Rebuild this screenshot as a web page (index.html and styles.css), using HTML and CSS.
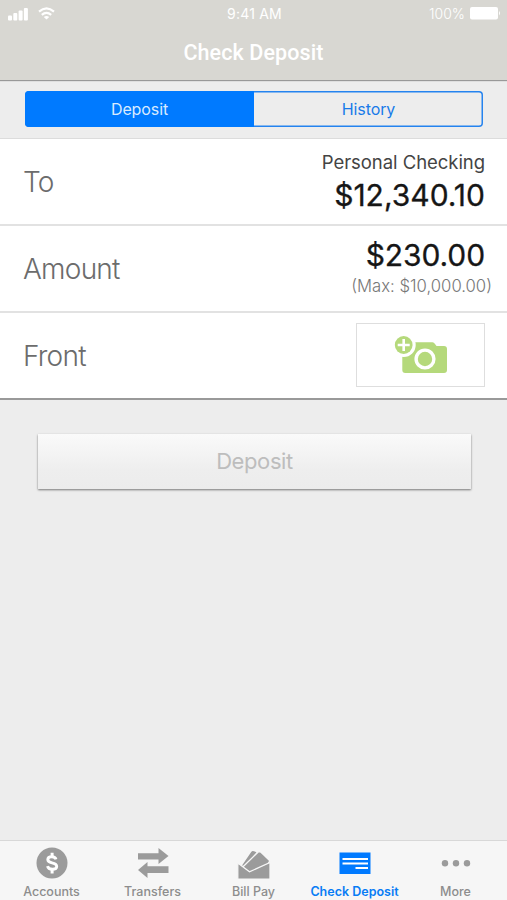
FILE: index.html
```html
<!DOCTYPE html>
<html lang="en">
<head>
<meta charset="utf-8">
<title>Check Deposit</title>
<link rel="stylesheet" href="styles.css">
</head>
<body>
<div class="app">
  <header class="header">
    <div class="status">
      <div class="signal">
        <svg width="21" height="14" viewBox="0 0 21 14" fill="#fff"><rect x="0" y="8.5" width="4" height="5" rx="1"/><rect x="5.3" y="6" width="4" height="7.5" rx="1"/><rect x="10.6" y="3.5" width="4" height="10" rx="1"/><rect x="15.9" y="1" width="4" height="12.5" rx="1"/></svg>
        <svg class="wifi" width="17" height="13" viewBox="0 0 17 13" fill="none" stroke="#fff" stroke-width="2.2"><path d="M1 4.600Q8.500-1.800 16 4.600M3.800 7.800Q8.500 3.800 13.200 7.800"/><path fill="#fff" stroke="none" d="M5.800 10Q8.500 7.800 11.200 10L8.500 12.600Z"/></svg>
      </div>
      <span class="time">9:41 AM</span>
      <div class="battery"><span class="percent">100%</span><svg width="31" height="13" viewBox="0 0 31 13" fill="#fff"><rect width="28" height="12.500" rx="2"/><path d="M29 4q2 2.200 0 4.500z"/></svg></div>
    </div>
    <h1 class="title">Check Deposit</h1>
  </header>
  <nav class="segments">
    <div class="control"><span class="segment selected">Deposit</span><span class="segment">History</span></div>
  </nav>
  <main class="form">
    <section class="row"><span class="label">To</span><div class="value"><span class="account">Personal Checking</span><span class="money balance">$12,340.10</span></div></section>
    <section class="row"><span class="label">Amount</span><div class="value"><span class="money amount">$230.00</span><span class="limit">(Max: $10,000.00)</span></div></section>
    <section class="row"><span class="label">Front</span>
      <div class="photo"><svg width="54" height="40" viewBox="0 0 54 40"><path fill="#b5d97b" d="M11 16H16V11L21 7.300H38.500Q40 7.300 41 9L42.500 11H50Q53 11 53 14V35Q53 38 50 38H11.300Q8.300 38 8.300 35V18Z"/><circle cx="31" cy="24" r="8.900" fill="#b5d97b" stroke="#fff" stroke-width="3.400"/><circle cx="9.700" cy="10" r="12" fill="#fff"/><circle cx="9.700" cy="10" r="8.900" fill="#b5d97b"/><path d="M9.700 4V16M3.700 10H15.700" stroke="#fff" stroke-width="2.600"/></svg></div>
    </section>
  </main>
  <div class="submit">Deposit</div>
  <footer class="tabs">
    <div class="tab"><svg width="32" height="32" viewBox="0 0 32 32"><circle cx="16" cy="16" r="15.500" fill="#9b9b9b"/><path d="M20 12.400Q19.200 9.700 16 9.700Q11.800 9.700 11.800 12.600Q11.800 15 16 15.800Q20.700 16.700 20.700 19.500Q20.700 22.300 16.300 22.300Q12.300 22.300 11.500 19.200" fill="none" stroke="#fff" stroke-width="2.900"/><path d="M16.100 5.700V10M16.100 22V26.500" stroke="#fff" stroke-width="3"/></svg><span class="name accounts">Accounts</span></div>
    <div class="tab"><svg width="32" height="32" viewBox="0 0 32 32" fill="#9b9b9b"><path d="M1 6.300H21.500V1L31.500 9L21.500 17V12.500H1ZM31.500 19.300H10.500V15L1 23L10.500 31V26H31.500Z"/></svg><span class="name transfers">Transfers</span></div>
    <div class="tab"><svg width="34" height="32" viewBox="0 0 34 32" fill="#9b9b9b"><path d="M5 18.500L14.200 5Q15.200 3.500 17 4.200L19.500 5.200L8 20Z"/><path d="M5.500 20.300L21.500 4.700L24 5.200L32.800 13.700L31 17L13 26Z" stroke="#f6f6f6" stroke-width="1.300"/><path d="M.8 16L12.500 24.800L33 15.500V32.200H.8Z" stroke="#f6f6f6" stroke-width="1.300"/></svg><span class="name billpay">Bill Pay</span></div>
    <div class="tab active"><svg width="32" height="32" viewBox="0 0 32 32"><rect x=".5" y="5.500" width="31" height="21.500" fill="#007aff"/><path d="M3.500 12H29M3.500 16.500H29M16.500 21H29" stroke="#fff" stroke-width="1.800"/></svg><span class="name check">Check Deposit</span></div>
    <div class="tab"><svg width="32" height="32" viewBox="0 0 32 32" fill="#9b9b9b"><circle cx="5" cy="16.300" r="3.200"/><circle cx="16" cy="16.300" r="3.200"/><circle cx="27" cy="16.300" r="3.200"/></svg><span class="name more">More</span></div>
  </footer>
</div>
</body>
</html>
```
FILE: styles.css
```css
* { box-sizing: border-box; }
body { margin: 0; font-family: Inter, "Liberation Sans", sans-serif; background: #ededed; }
svg { display: block; flex: none; }
.app { width: 507px; height: 900px; display: flex; flex-direction: column; background: #ededed; overflow: hidden; }
.header { height: 80px; flex: none; background: #d8d7d2; box-shadow: 0 1px 1px #999; z-index: 1; color: #fff; }
.status { height: 27px; display: grid; grid-template-columns: 1fr auto 1fr; align-items: center; padding: 0 6px 0 8px; font-size: 14px; }
.signal, .battery { display: flex; align-items: center; }
.signal { gap: 9px; }
.battery { justify-content: flex-end; gap: 5px; font-weight: 300; }
.time { letter-spacing: .2px; }
.title { font: 500 21.500px/50px Roboto, sans-serif; letter-spacing: .1px; margin: 1px 0 0; text-align: center; }
.segments { height: 59px; flex: none; padding: 11px 24px 12px 25px; border-bottom: 1px solid #dcdcdc; }
.control { height: 36px; display: flex; box-shadow: inset 0 0 0 1.500px #2583ef; border-radius: 4px; overflow: hidden; }
.segment { flex: 1; display: flex; align-items: center; justify-content: center; color: #187be9; font-size: 16px; letter-spacing: -.1px; }
.selected { background: #007aff; color: #d9ebff; }
.form { height: 261px; flex: none; background: #fff; border-bottom: 2px solid #999; }
.row { height: 87px; display: flex; justify-content: space-between; padding: 0 22px 0 23px; border-bottom: 2px solid #e2e2e2; }
.row:last-child { border: 0; }
.label { line-height: 86px; font-size: 28px; font-weight: 300; color: #6c6c6c; letter-spacing: -.75px; }
.value { display: flex; flex-direction: column; align-items: flex-end; white-space: nowrap; }
.account { font-size: 18.500px; line-height: 26px; margin-top: 10px; color: #444; letter-spacing: -.05px; }
.money { font-size: 30px; line-height: 38px; font-weight: 400; -webkit-text-stroke: .3px #161616; color: #161616; letter-spacing: 0; }
.balance { margin-top: 1px; }
.amount { margin-top: 10px; letter-spacing: -.1px; }
.limit { font-size: 16.700px; line-height: 24px; font-weight: 300; color: #777; margin-right: -7px; }
.photo { width: 129px; height: 64px; margin-top: 10px; border: 1px solid #dedede; display: flex; align-items: center; justify-content: center; }
.submit { width: 433px; height: 55px; margin: 34px 0 0 38px; padding-bottom: 2px; flex: none; display: flex; align-items: center; justify-content: center; color: #bdbdbd; font-size: 22px; letter-spacing: -.4px; background: linear-gradient(#fafafa, #eee 65%, #ececec); box-shadow: 0 1px 2px #777; }
.tabs { height: 60px; margin-top: auto; display: grid; grid-template-columns: repeat(5, 1fr); padding: 0 1px; background: #f6f6f6; border-top: 1px solid #d8d8d8; }
.tab { display: flex; flex-direction: column; align-items: center; padding-top: 6px; color: #8d8d8d; }
.name { font-size: 12.500px; line-height: 16px; margin-top: 5px; white-space: nowrap; font-weight: 500; }
.active { color: #087cf5; }
.active .name { font-weight: 600; }
```
